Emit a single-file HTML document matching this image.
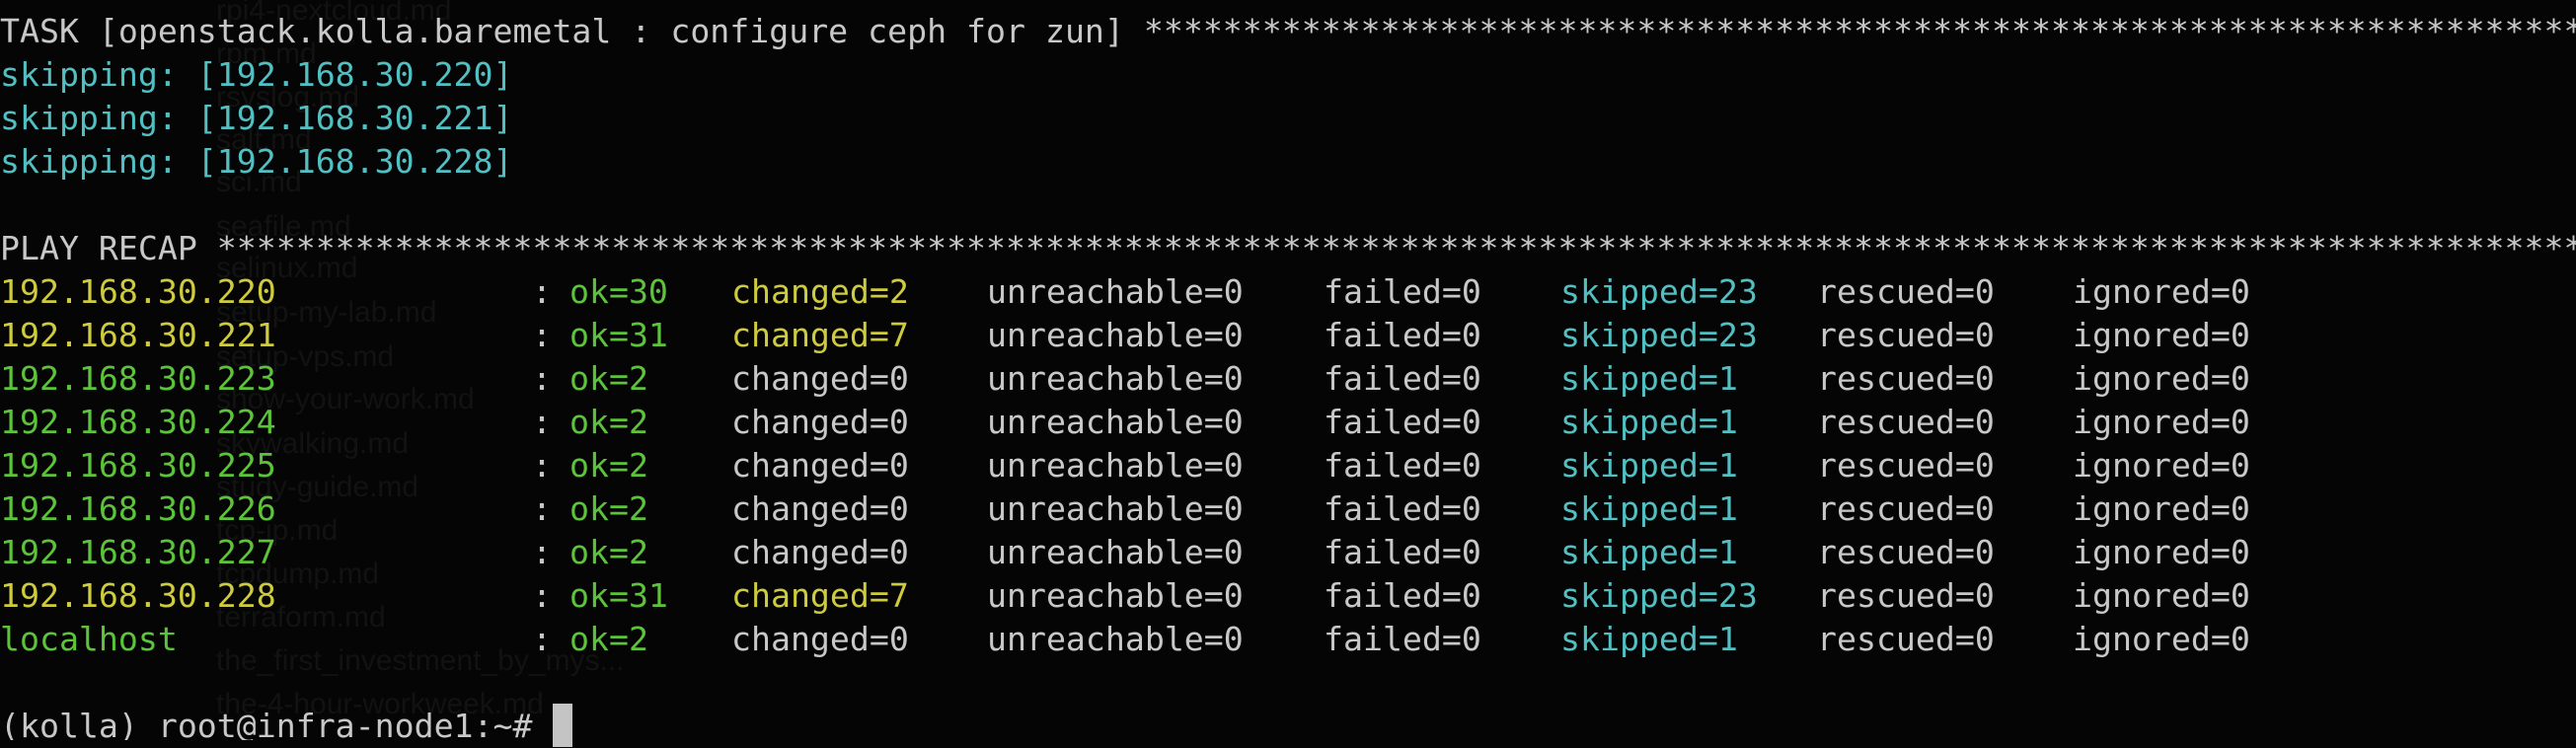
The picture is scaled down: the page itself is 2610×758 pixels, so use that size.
<!DOCTYPE html>
<html><head><meta charset="utf-8"><style>
html,body{margin:0;padding:0;background:#050505;width:2610px;height:758px;overflow:hidden}
body{position:relative}
.t{position:absolute;left:0;top:9.5px;width:2610px;height:740px;overflow:hidden;font-family:"DejaVu Sans Mono","Liberation Mono",monospace;font-size:33.2px;line-height:44px;color:#c8c8c8;white-space:pre}
.l{position:absolute;height:44px;left:0;width:2610px;overflow:hidden}
.l span{position:absolute;top:0}
.c{color:#52c0c2}.y{color:#cfcb3e}.g{color:#5cc43a}
.gh{position:absolute;font-family:"Liberation Sans",sans-serif;font-size:30px;line-height:34px;color:#121212;white-space:pre}
.cur{position:absolute;left:560px;top:713px;width:20px;height:44px;background:#c4c4c4}
</style></head><body>
<div class="gh" style="left:219px;top:-6px">rpi4-nextcloud.md</div>
<div class="gh" style="left:219px;top:38px">rpm.md</div>
<div class="gh" style="left:219px;top:82px">rsyslog.md</div>
<div class="gh" style="left:219px;top:125px">salt.md</div>
<div class="gh" style="left:219px;top:168px">sci.md</div>
<div class="gh" style="left:219px;top:213px">seafile.md</div>
<div class="gh" style="left:219px;top:255px">selinux.md</div>
<div class="gh" style="left:219px;top:300px">setup-my-lab.md</div>
<div class="gh" style="left:219px;top:345px">setup-vps.md</div>
<div class="gh" style="left:219px;top:388px">show-your-work.md</div>
<div class="gh" style="left:219px;top:433px">skywalking.md</div>
<div class="gh" style="left:219px;top:477px">study-guide.md</div>
<div class="gh" style="left:219px;top:521px">tcp-ip.md</div>
<div class="gh" style="left:219px;top:565px">tcpdump.md</div>
<div class="gh" style="left:219px;top:609px">terraform.md</div>
<div class="gh" style="left:219px;top:653px">the_first_investment_by_mys...</div>
<div class="gh" style="left:219px;top:697px">the-4-hour-workweek.md</div>
<div class="t">
<div class="l" style="top:0"><span>TASK [openstack.kolla.baremetal : configure ceph for zun] ************************************************************************************************</span></div>
<div class="l c" style="top:44px"><span>skipping: [192.168.30.220]</span></div>
<div class="l c" style="top:88px"><span>skipping: [192.168.30.221]</span></div>
<div class="l c" style="top:132px"><span>skipping: [192.168.30.228]</span></div>
<div class="l" style="top:220px"><span>PLAY RECAP ****************************************************************************************************************************************</span></div>

<div class="l" style="top:264px"><span class="y" style="left:0">192.168.30.220</span><span style="left:539px">:</span><span class="g" style="left:577px">ok=30</span><span class="y" style="left:741px">changed=2</span><span style="left:1000px">unreachable=0</span><span style="left:1341px">failed=0</span><span class="c" style="left:1581px">skipped=23</span><span style="left:1841px">rescued=0</span><span style="left:2100px">ignored=0</span></div>
<div class="l" style="top:308px"><span class="y" style="left:0">192.168.30.221</span><span style="left:539px">:</span><span class="g" style="left:577px">ok=31</span><span class="y" style="left:741px">changed=7</span><span style="left:1000px">unreachable=0</span><span style="left:1341px">failed=0</span><span class="c" style="left:1581px">skipped=23</span><span style="left:1841px">rescued=0</span><span style="left:2100px">ignored=0</span></div>
<div class="l" style="top:352px"><span class="g" style="left:0">192.168.30.223</span><span style="left:539px">:</span><span class="g" style="left:577px">ok=2</span><span style="left:741px">changed=0</span><span style="left:1000px">unreachable=0</span><span style="left:1341px">failed=0</span><span class="c" style="left:1581px">skipped=1</span><span style="left:1841px">rescued=0</span><span style="left:2100px">ignored=0</span></div>
<div class="l" style="top:396px"><span class="g" style="left:0">192.168.30.224</span><span style="left:539px">:</span><span class="g" style="left:577px">ok=2</span><span style="left:741px">changed=0</span><span style="left:1000px">unreachable=0</span><span style="left:1341px">failed=0</span><span class="c" style="left:1581px">skipped=1</span><span style="left:1841px">rescued=0</span><span style="left:2100px">ignored=0</span></div>
<div class="l" style="top:440px"><span class="g" style="left:0">192.168.30.225</span><span style="left:539px">:</span><span class="g" style="left:577px">ok=2</span><span style="left:741px">changed=0</span><span style="left:1000px">unreachable=0</span><span style="left:1341px">failed=0</span><span class="c" style="left:1581px">skipped=1</span><span style="left:1841px">rescued=0</span><span style="left:2100px">ignored=0</span></div>
<div class="l" style="top:484px"><span class="g" style="left:0">192.168.30.226</span><span style="left:539px">:</span><span class="g" style="left:577px">ok=2</span><span style="left:741px">changed=0</span><span style="left:1000px">unreachable=0</span><span style="left:1341px">failed=0</span><span class="c" style="left:1581px">skipped=1</span><span style="left:1841px">rescued=0</span><span style="left:2100px">ignored=0</span></div>
<div class="l" style="top:528px"><span class="g" style="left:0">192.168.30.227</span><span style="left:539px">:</span><span class="g" style="left:577px">ok=2</span><span style="left:741px">changed=0</span><span style="left:1000px">unreachable=0</span><span style="left:1341px">failed=0</span><span class="c" style="left:1581px">skipped=1</span><span style="left:1841px">rescued=0</span><span style="left:2100px">ignored=0</span></div>
<div class="l" style="top:572px"><span class="y" style="left:0">192.168.30.228</span><span style="left:539px">:</span><span class="g" style="left:577px">ok=31</span><span class="y" style="left:741px">changed=7</span><span style="left:1000px">unreachable=0</span><span style="left:1341px">failed=0</span><span class="c" style="left:1581px">skipped=23</span><span style="left:1841px">rescued=0</span><span style="left:2100px">ignored=0</span></div>
<div class="l" style="top:616px"><span class="g" style="left:0">localhost</span><span style="left:539px">:</span><span class="g" style="left:577px">ok=2</span><span style="left:741px">changed=0</span><span style="left:1000px">unreachable=0</span><span style="left:1341px">failed=0</span><span class="c" style="left:1581px">skipped=1</span><span style="left:1841px">rescued=0</span><span style="left:2100px">ignored=0</span></div>

<div class="l" style="top:704px;height:36px"><span>(kolla) root@infra-node1:~#</span></div>
</div>
<div class="cur"></div>
</body></html>
